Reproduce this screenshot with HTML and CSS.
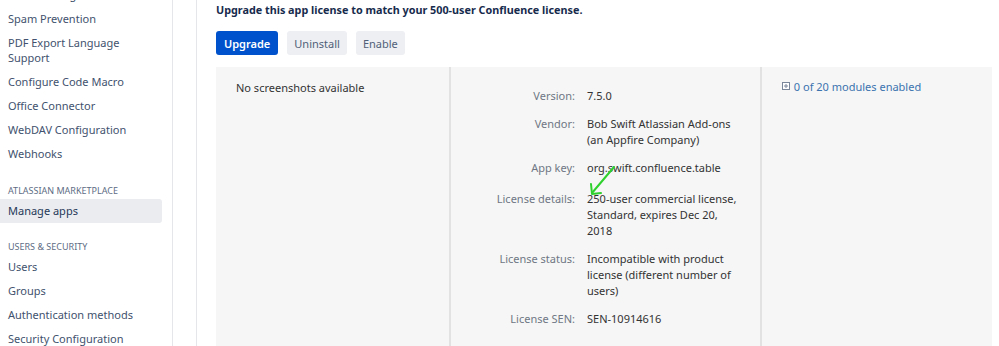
FILE: index.html
```html
<!DOCTYPE html>
<html lang="en">

<head>
    <meta charset="UTF-8">
    <meta name="viewport" content="width=device-width, initial-scale=1.0">
    <title>Manage apps</title>
    <link rel="stylesheet" href="styles.css">
</head>

<body>
    <div class="page">
        <aside class="sidebar">
            <ul class="nav nav-first">
                <li>Rate Limiting</li>
                <li>Spam Prevention</li>
                <li>PDF Export Language Support</li>
                <li>Configure Code Macro</li>
                <li>Office Connector</li>
                <li>WebDAV Configuration</li>
                <li>Webhooks</li>
            </ul>
            <h4 class="nav-heading">Atlassian Marketplace</h4>
            <ul class="nav">
                <li class="active">Manage apps</li>
            </ul>
            <h4 class="nav-heading">Users &amp; Security</h4>
            <ul class="nav">
                <li>Users</li>
                <li>Groups</li>
                <li>Authentication methods</li>
                <li>Security Configuration</li>
            </ul>
        </aside>

        <main class="content">
            <p class="upgrade-msg">Upgrade this app license to match your 500-user Confluence license.</p>
            <div class="actions">
                <button class="btn btn-primary">Upgrade</button>
                <button class="btn">Uninstall</button>
                <button class="btn">Enable</button>
            </div>

            <div class="app-panel">
                <div class="col col-screens">No screenshots available</div>
                <div class="col col-details">
                    <dl class="details">
                        <dt>Version:</dt>
                        <dd>7.5.0</dd>
                        <dt>Vendor:</dt>
                        <dd>Bob Swift Atlassian Add-ons (an Appfire Company)</dd>
                        <dt>App key:</dt>
                        <dd>org.swift.confluence.table</dd>
                        <dt class="spaced">License details:</dt>
                        <dd class="spaced">250-user commercial license, Standard, expires Dec 20, 2018</dd>
                        <dt>License status:</dt>
                        <dd>Incompatible with product license (different number of users)</dd>
                        <dt>License SEN:</dt>
                        <dd>SEN-10914616</dd>
                        <dt class="last">Licensed to:</dt>
                        <dd class="last">on www.swift.com</dd>
                    </dl>
                    <!-- hand-drawn annotation arrow -->
                    <svg class="arrow" width="40" height="40" viewBox="0 0 40 40">
                        <path d="M31 3 L9 29" fill="none" stroke="#2fd12f" stroke-width="2" stroke-linecap="round"/>
                        <path d="M8 20 L9 30 L18 29" fill="none" stroke="#2fd12f" stroke-width="2" stroke-linecap="round" stroke-linejoin="round"/>
                    </svg>
                </div>
                <div class="col col-modules">
                    <a href="#" class="modules-link">
                        <svg class="expander" width="8" height="8" viewBox="0 0 8 8">
                            <rect x="0.5" y="0.5" width="7" height="7" fill="#fff" stroke="#7a869a"/>
                            <path d="M2 4 H6 M4 2 V6" stroke="#7a869a"/>
                        </svg>
                        0 of 20 modules enabled
                    </a>
                </div>
            </div>
        </main>
    </div>
</body>

</html>
```

FILE: styles.css
```css
body {
    margin: 0;
    font-family: "Noto Sans", "Open Sans", sans-serif;
    font-size: 11px;
    color: #333;
    background-color: #fff;
    height: 346px;
    overflow: hidden;
}

.page {
    display: flex;
    align-items: flex-start;
}

/* left admin navigation */
.sidebar {
    width: 173px;
    box-sizing: border-box;
    padding-right: 10px;
    border-right: 1px solid #e4e6ea;
    min-height: 360px;
}

.nav {
    list-style: none;
    margin: 0;
    padding: 0;
}

.nav-first {
    margin-top: -17px;
}

.nav li {
    padding: 5px 8px;
    line-height: 14.2px;
    color: #42526e;
    border-radius: 0 3px 3px 0;
}

.nav li.active {
    background-color: #ebecf0;
    color: #253858;
}

.nav-heading {
    margin: 18px 0 2px;
    padding-left: 8px;
    font-size: 9px;
    line-height: 12px;
    font-weight: normal;
    text-transform: uppercase;
    color: #5e6c84;
}

/* main app area */
.content {
    flex: 1;
    margin-left: 23px;
    padding: 2px 7px 0 19px;
    border-left: 1px solid #e4e6ea;
    min-height: 360px;
}

.upgrade-msg {
    margin: 0;
    line-height: 16px;
    font-size: 10.8px;
    font-weight: bold;
    color: #172b4d;
}

.actions {
    display: flex;
    gap: 9px;
    margin-top: 13px;
}

.btn {
    height: 24px;
    padding: 0 7px;
    font-family: inherit;
    font-size: 11px;
    color: #505f79;
    background-color: #eeeff2;
    border: none;
    border-radius: 3px;
}

.btn-primary {
    padding: 0 8px;
    background-color: #0052cc;
    color: #fff;
    font-weight: 600;
}

.app-panel {
    display: flex;
    margin-top: 12px;
    background-color: #f6f6f6;
    min-height: 300px;
}

.col {
    box-sizing: border-box;
}

.col-screens {
    width: 233px;
    padding: 13px 20px;
    line-height: 16px;
}

.col-details {
    position: relative;
    width: 313px;
    padding-top: 21px;
    border-left: 2px solid #e2e2e2;
    border-right: 2px solid #e2e2e2;
}

.col-modules {
    flex: 1;
    padding: 12px 20px;
    line-height: 16px;
}

.details {
    display: grid;
    grid-template-columns: 124px 150px;
    column-gap: 12px;
    row-gap: 12px;
    margin: 0;
    line-height: 16px;
}

.details dt {
    text-align: right;
    color: #6f7784;
}

.details dd {
    margin: 0;
    color: #333;
}

.details .spaced {
    margin-top: 3px;
}

.details .last {
    margin-top: 4px;
}

.arrow {
    position: absolute;
    left: 132px;
    top: 97px;
}

.modules-link {
    color: #3b73af;
    text-decoration: none;
}

.expander {
    vertical-align: 1px;
    margin-right: 1px;
}
```
